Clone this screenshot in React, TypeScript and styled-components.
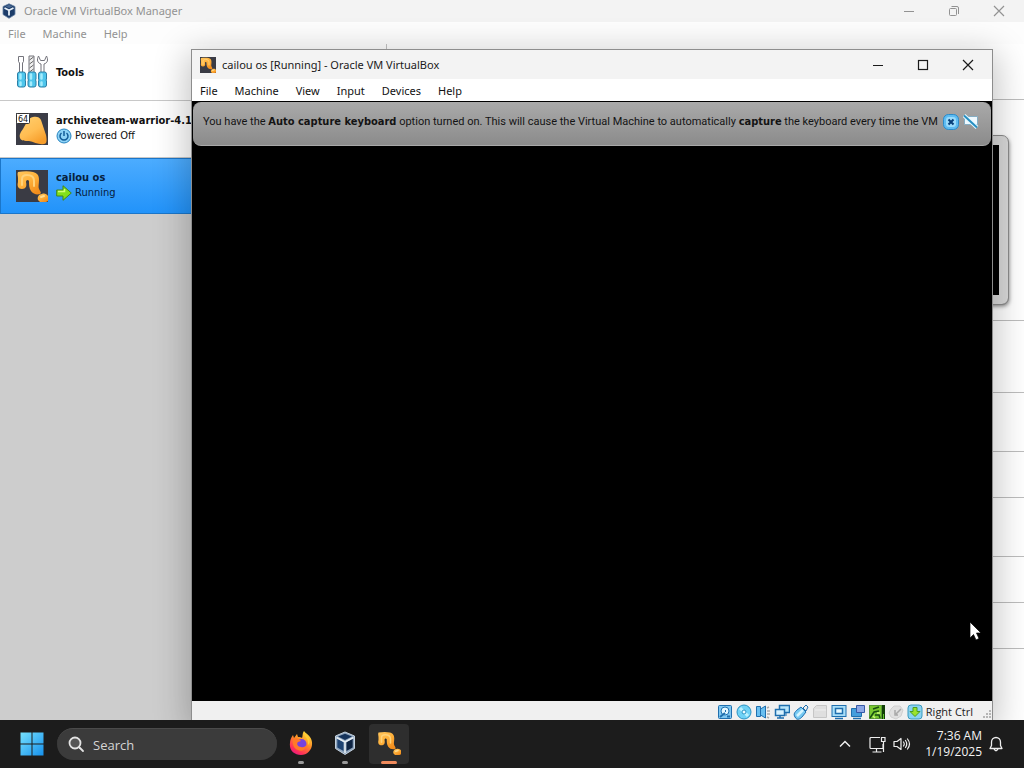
import React from "react";
import styled, { createGlobalStyle, css } from "styled-components";

const ui = `"Open Sans", "Noto Sans", sans-serif`;
const chrome = `"Noto Sans", "Open Sans", sans-serif`;
const qt = `"DejaVu Sans Condensed", "DejaVu Sans", sans-serif`;

const GlobalStyle = createGlobalStyle`
  *, *::before, *::after { box-sizing: border-box; }
  body { margin: 0; font-family: ${ui}; font-size: 12px; overflow: hidden; }
  button { font: inherit; color: inherit; background: none; border: 0; padding: 0; margin: 0; }
  svg { display: block; flex: none; }
  h1, h2, p { margin: 0; font: inherit; }
`;

const Desktop = styled.div`
  display: flex;
  flex-direction: column;
  min-height: 100vh;
`;

const Workspace = styled.div`
  position: relative;
  flex: 1;
  display: flex;
  flex-direction: column;
  overflow: hidden;
`;

const ManagerWindow = styled.main`
  flex: 1;
  display: flex;
  flex-direction: column;
  background: #fff;
`;

const TitleBar = styled.header<{ $active?: boolean }>`
  display: flex;
  align-items: center;
  gap: ${(p) => (p.$active ? 6 : 8)}px;
  height: ${(p) => (p.$active ? 29 : 22)}px;
  padding-left: ${(p) => (p.$active ? 8 : 2)}px;
  background: #f3f3f3;
  color: ${(p) => (p.$active ? "#1a1a1a" : "#929292")};
  font-family: ${chrome};
  font-size: 11px;
  line-height: 16px;
`;

const Title = styled.h1`
  flex: 1;
  white-space: nowrap;
`;

const WindowButton = styled.button`
  display: grid;
  place-items: center;
  width: 45px;
  height: 20px;
`;

const WindowButtons = styled.div<{ $inset: number }>`
  display: flex;
  padding-right: ${(p) => p.$inset}px;
`;

const MenuBar = styled.nav<{ $active?: boolean }>`
  display: flex;
  align-items: center;
  gap: 17px;
  height: 22px;
  padding: 2px 8px 0;
  background: ${(p) => (p.$active ? "#fff" : "#fdfdfd")};
  color: ${(p) => (p.$active ? "#111" : "#929292")};
  font-family: ${chrome};
  font-size: 11px;
  line-height: 16px;
`;

const ManagerBody = styled.div`
  flex: 1;
  display: flex;
`;

const Sidebar = styled.aside`
  display: flex;
  flex-direction: column;
  width: 387px;
  border-right: 1px solid #c4c4c4;
  background: #cdcdcd;
  font-family: ${qt};
  font-size: 11px;
`;

const MachineRow = styled.button<{ $selected?: boolean }>`
  display: flex;
  align-items: center;
  gap: 8px;
  height: 57px;
  padding: 0 16px;
  text-align: left;
  background: #fff;
  color: #111;
  border-bottom: 1px solid #c8c8c8;
  ${(p) =>
    p.$selected &&
    css`
      height: 56px;
      color: #06203c;
      background: linear-gradient(#4cacff, #2293fa);
      border: 1px solid #1b76c9;
      padding: 0 15px;
    `}
`;

const MachineText = styled.span`
  display: flex;
  flex-direction: column;
  padding-bottom: 2px;
  white-space: nowrap;
`;

const MachineName = styled.strong`
  font-size: 11px;
  line-height: 15px;
`;

const MachineState = styled.span`
  display: flex;
  align-items: center;
  gap: 3px;
  line-height: 16px;
`;

const Details = styled.section`
  flex: 1;
  display: flex;
  flex-direction: column;
  background: #fff;
`;

const DetailTools = styled.div`
  height: 56px;
  border-bottom: 1px solid #bdbdbd;
`;

const PreviewPane = styled.div`
  display: flex;
  justify-content: flex-end;
  height: 221px;
  padding: 36px 16px 16px;
  border-bottom: 1px solid #bdbdbd;
`;

const Monitor = styled.div`
  width: 240px;
  border: 9px solid #dadada;
  outline: 1px solid #8c8c8c;
  border-radius: 6px;
  background: #000;
  box-shadow: 1px 2px 4px #777;
`;

const DetailSection = styled.div<{ $height: number }>`
  height: ${(p) => p.$height}px;
  border-bottom: 1px solid #bdbdbd;
`;

const MachineWindow = styled.section`
  position: absolute;
  inset: 49px 31px 0 191px;
  display: flex;
  flex-direction: column;
  border: 1px solid #8d8d8d;
  border-bottom: 0;
  background: #f0f0f0;
  box-shadow: 0 8px 32px 4px rgba(0, 0, 0, 0.24);
`;

const Screen = styled.div`
  flex: 1;
  padding: 1px;
  background: #000;
`;

const Notice = styled.div`
  display: flex;
  align-items: center;
  height: 44px;
  padding: 0 12px 4px 10px;
  border: 1px solid #a9a9a9;
  border-width: 1px 0;
  border-radius: 8px;
  background: linear-gradient(#a9a9a9, #8b8b8b);
  color: #141414;
  font-family: Roboto, "Open Sans", sans-serif;
  font-size: 11px;
  line-height: 16px;
`;

const NoticeText = styled.p`
  flex: 1;
  min-width: 0;
  white-space: nowrap;
  b { font-family: ${qt}; }
`;

const NoticeActions = styled.div`
  display: flex;
  gap: 4px;
  padding-left: 8px;
`;

const StatusBar = styled.footer`
  display: flex;
  align-items: flex-end;
  justify-content: flex-end;
  gap: 3px;
  height: 19px;
  color: #222;
  font-size: 11px;
  line-height: 16px;
`;

const HostKey = styled.span`
  padding-right: 6px;
`;

const Cursor = styled.div`
  position: absolute;
  right: 43px;
  bottom: 79px;
`;

const Taskbar = styled.footer`
  display: flex;
  align-items: center;
  height: 48px;
  padding: 0 21px 0 19px;
  background: #1c1c1c;
  color: #f4f4f4;
`;

const StartButton = styled.button`
  display: grid;
  place-items: center;
  width: 26px;
  height: 40px;
`;

const SearchBox = styled.label`
  display: flex;
  align-items: center;
  gap: 8px;
  width: 220px;
  height: 32px;
  margin: 0 4px 0 12px;
  padding: 0 11px;
  border-radius: 16px;
  background: #3b3b3b;
  border-top: 1px solid #4b4b4b;
`;

const SearchInput = styled.input`
  flex: 1;
  min-width: 0;
  padding: 0;
  border: 0;
  outline: 0;
  background: none;
  color: #d5d5d5;
  font: 13px/20px ${ui};
  &::placeholder { color: #d5d5d5; opacity: 1; }
`;

const TaskButtons = styled.div`
  flex: 1;
  display: flex;
  gap: 4px;
`;

const TaskButton = styled.button<{ $active?: boolean }>`
  display: flex;
  flex-direction: column;
  align-items: center;
  justify-content: space-between;
  width: 40px;
  height: 40px;
  padding: 7px 0 0;
  border-radius: 4px;
  background: ${(p) => (p.$active ? "#2e2e2e" : "transparent")};
  &::after {
    content: "";
    width: ${(p) => (p.$active ? 16 : 6)}px;
    height: 3px;
    border-radius: 2px;
    background: ${(p) => (p.$active ? "#f08b5c" : "#9a9a9a")};
  }
`;

const Tray = styled.div`
  display: flex;
  align-items: center;
  gap: 7px;
`;

const ChevronButton = styled.button`
  margin-right: 11px;
`;

const Clock = styled.time`
  display: flex;
  flex-direction: column;
  width: 64px;
  text-align: right;
  font-size: 12px;
  line-height: 16px;
`;

const MinimizeIcon = () => (
  <svg width="12" height="12" viewBox="0 0 12 12" stroke="currentColor"><path d="M1 6.500h10" /></svg>
);
const MaximizeIcon = () => (
  <svg width="12" height="12" viewBox="0 0 12 12" fill="none" stroke="currentColor" strokeWidth="1.200"><rect x="1.500" y="1.500" width="9" height="9" /></svg>
);
const RestoreIcon = () => (
  <svg width="12" height="12" viewBox="0 0 12 12" fill="none" stroke="currentColor"><rect x="1.500" y="3.500" width="7" height="7" rx="1" /><path d="M3.500 1.500h5.500a1.500 1.500 0 0 1 1.500 1.500v6" /></svg>
);
const CloseIcon = () => (
  <svg width="12" height="12" viewBox="0 0 12 12" stroke="currentColor" strokeWidth="1.200"><path d="M1 1l10 10M11 1L1 11" /></svg>
);

const CubeIcon = ({ size, light }: { size: number; light?: boolean }) =>
  light ? (
    <svg width={size} height={size} viewBox="0 0 24 24" strokeLinejoin="round">
      <path d="M12 1L21.500 5v12.500L12 23.500 2.500 17.500V5z" fill="#8fa5bd" stroke="#c3d1df" />
      <path d="M12 2.800l7 2.700-7 3.500-7-3.500z" fill="#15335b" />
      <path d="M4.300 7.500l6.200 3.500v9L4.300 16.500z" fill="#1d4373" />
      <path d="M19.700 7.500L13.500 11v9l6.200-3.500z" fill="#0e2443" />
      <path d="M3.500 6.500L12 11l8.500-4.500M12 11v11" fill="none" stroke="#e6eef5" strokeWidth="1.500" />
    </svg>
  ) : (
    <svg width={size} height={size + 2} viewBox="0 0 14 16" strokeLinejoin="round">
      <path d="M7 0.800l6 2.700v8L7 15.300 1 11.500v-8z" fill="#1c3c69" stroke="#6480a3" strokeWidth="0.800" />
      <path d="M7 1.800l3.500 1.700L7 5 3.500 3.500z" fill="#4a6a94" />
      <path d="M2.500 5L7 7.200 11.500 5M7 7v5.500" fill="none" stroke="#e6eff8" strokeWidth="1.800" />
    </svg>
  );

const Gold = () => (
  <defs>
    <linearGradient id="gold" x1="0" y1="0" x2="0.700" y2="1"><stop stopColor="#ffc65e" /><stop offset="0.500" stopColor="#ffb23c" /><stop offset="1" stopColor="#f28d1c" /></linearGradient>
  </defs>
);

const MachineIcon = ({ size, plain }: { size: number; plain?: boolean }) => (
  <svg width={size} height={size} viewBox="0 0 32 32">
    <Gold />
    {!plain && <rect width="32" height="32" fill="#3a3b44" />}
    <path d="M2 2c6-1 11-1 15 0 4 1 6 3 6 8 0 4-1 7 0 9 1 2 3 4 1 5-3 1-7 0-9-3-2-3-2-6-2-10-1-2-3-1-3 1 1 4 0 7-4 7-4 0-5-3-4-7V8C2 6 1 4 2 2z" fill="url(#gold)" />
    <path d="M22 30c-1-3 1-6 4-6 2-1 5 0 6 2v5l-2 1h-6z" fill="url(#gold)" />
    <path d="M6 15V9c0-3 2-4 5-4 5 0 7 2 7 6v5" fill="none" stroke="#ffd27a" strokeWidth="2" strokeLinecap="round" />
    <path d="M25 27l3-1" stroke="#ffdc90" strokeWidth="2" strokeLinecap="round" />
  </svg>
);

const ArchiveIcon = () => (
  <svg width="32" height="32" viewBox="0 0 32 32">
    <defs>
      <linearGradient id="lump" x1="0" y1="0" x2="0.600" y2="1"><stop stopColor="#ffd070" /><stop offset="0.600" stopColor="#ffbd52" /><stop offset="1" stopColor="#f79e2b" /></linearGradient>
    </defs>
    <rect width="32" height="32" fill="#3b3c46" />
    <path d="M17 4c3-1 7 0 8 3l5 15c1 5 1 9-2 9-5 1-10-2-15-3-4 0-8 0-9-3-1-4 1-6 3-9 3-5 5-11 10-12z" fill="url(#lump)" />
    <rect x="0.500" y="0.500" width="13" height="10" rx="1" fill="#fff" stroke="#333" />
    <text x="7" y="9" textAnchor="middle" fontFamily="DejaVu Sans" fontSize="8" fill="#111">64</text>
  </svg>
);

const ToolsIcon = () => (
  <svg width="32" height="34" viewBox="0 0 32 34" strokeLinejoin="round">
    <path d="M2.500 1.500h5v5L6.500 8v10h-3V8l-1-1.500z" fill="#fff" stroke="#74747c" />
    <path d="M13 1h5v17h-5z" fill="#eee" stroke="#74747c" />
    <path d="M13.500 5l4-3M13.500 9l4-3M13.500 13l4-3M13.500 17l4-3" stroke="#666" />
    <path d="M22.500 1c-2 4-1 7 2.500 8v9h3V9c3.500-1 4.500-4 2.500-8l-2 4.500h-4z" fill="#fff" stroke="#74747c" />
    {[1.500, 12, 22.500].map((x) => (
      <g key={x}>
        <path d={`M${x} 19q0-2 2-2h4q2 0 2 2v5q-1 1 0 2v4q0 2-2 2h-4q-2 0-2-2v-4q1-1 0-2z`} fill="#4fc6ec" stroke="#2b7ea5" />
        <path d={`M${x + 3} 19.500v4M${x + 3} 27.500v2.500`} stroke="#a5ecfc" strokeWidth="2.500" strokeLinecap="round" />
      </g>
    ))}
  </svg>
);

const PowerIcon = () => (
  <svg width="16" height="16" viewBox="0 0 16 16" fill="none"><circle cx="8" cy="8" r="7" fill="#8ed3f7" stroke="#2684c0" /><path d="M5.500 5a4 4 0 1 0 5 0M8 3v5" stroke="#125c99" strokeWidth="1.500" /></svg>
);
const RunIcon = () => (
  <svg width="16" height="16" viewBox="0 0 16 16"><path d="M.700 5h6.300V.700L15.300 8 7 15.300V11H.700z" fill="#82e01d" stroke="#438619" strokeLinejoin="round" /><path d="M2 6.500h6.500V4" fill="none" stroke="#d1ff78" strokeWidth="1.500" /></svg>
);

const DismissIcon = () => (
  <svg width="16" height="16" viewBox="0 0 16 16"><rect x="0.500" y="0.500" width="15" height="15" rx="5" fill="#5ebcf2" stroke="#2b8bc9" /><rect x="3" y="3" width="10" height="10" rx="3" fill="#9adbfb" /><path d="M5.500 5.500l5 5M10.500 5.500l-5 5" stroke="#073e79" strokeWidth="2" /></svg>
);
const SilenceIcon = () => (
  <svg width="16" height="16" viewBox="0 0 16 16"><path d="M1.500 2.500h13v8h-2v4l-4-4h-7z" fill="#eff9ff" stroke="#85adc3" /><path d="M1 1.500l13 12" stroke="#e4f9ff" strokeWidth="4" /><path d="M1 1.500l13 12" stroke="#268ec2" strokeWidth="2" /></svg>
);

const StatusIcon = ({ children }: { children: React.ReactNode }) => (
  <svg width="16" height="16" viewBox="0 0 16 16" fill="none" stroke="#1f6fae">{children}</svg>
);

const StatusIcons = () => (
  <>
    <StatusIcon><rect x="1.500" y="1.500" width="13" height="13" rx="1" fill="#7fc8f2" /><circle cx="8" cy="7" r="4" fill="#e3f7ff" /><path d="M8 7h1M3 13l5-4M10 12.500h3" strokeWidth="2" /></StatusIcon>
    <StatusIcon><circle cx="8" cy="8" r="7" fill="#6fd2f6" stroke="#2a93c4" /><path d="M4 4l8 8" stroke="#b9f1ff" strokeWidth="3" /><circle cx="8" cy="8" r="2" fill="#effcff" stroke="#2a93c4" /></StatusIcon>
    <StatusIcon><path d="M1.500 2.500h4v10h-4zM5.500 5l5-3v12l-5-3z" fill="#69bff0" /><path d="M12 4l2-1M12 7h3M12 10h3M12 13l2 1" stroke="#aaa" strokeWidth="1.500" /></StatusIcon>
    <StatusIcon><rect x="5.500" y="1.500" width="10" height="7" fill="#b8e6fb" strokeWidth="1.500" /><path d="M12 9v3" /><rect x="1.500" y="5.500" width="9" height="6" fill="#d9f3ff" strokeWidth="1.500" /><path d="M3 14h7M6 12v2" strokeWidth="1.500" /></StatusIcon>
    <StatusIcon><path d="M10 4l3-3 2 2-2 4z" fill="#eee" /><path d="M2 13c-2-3 0-5 2-7l4-3 5 5-4 5c-2 2-5 4-7 0z" fill="#75c9f2" /><path d="M4 12l6-6" stroke="#d4f4ff" strokeWidth="2.500" /></StatusIcon>
    <StatusIcon><path d="M1.500 4.500l3-3h10v12h-13z" fill="#dfdfdf" stroke="#c6c6c6" /><path d="M3 6h11" stroke="#f0f0f0" /></StatusIcon>
    <StatusIcon><rect x="1" y="1.500" width="14" height="11" fill="#a8def8" /><rect x="4.500" y="4.500" width="7" height="5" fill="#e9faff" strokeWidth="1.500" /><path d="M4 14.500h8" strokeWidth="1.500" /></StatusIcon>
    <StatusIcon><path d="M1.500 4.500h10v8h-10z" fill="#459edc" /><path d="M6.500 1.500h8v7h-8z" fill="#8ca7e5" stroke="#3658a6" /><path d="M3 14.500h8" strokeWidth="1.500" /></StatusIcon>
    <StatusIcon><rect x="0.500" y="1.500" width="12" height="13" fill="#79c830" stroke="#5a9b34" /><path d="M1 14l4-6 5-1M10 3L4 5M6 11h4l1 3" stroke="#184e12" strokeWidth="1.500" /><path d="M4 12l2 2M8 9h3" stroke="#caf875" strokeWidth="1.500" /><path d="M14.500 1v14" stroke="#123f08" strokeWidth="3" /><path d="M14.500 10v5" stroke="#61c22b" /></StatusIcon>
    <StatusIcon><path d="M3 5l3-3h6l3 4-2 6-5 3-5-2-2-4z" fill="#e0e0e0" stroke="#d0d0d0" /><path d="M8 10l5-5M7 6v5h3" stroke="#a8a8a8" strokeWidth="1.500" /></StatusIcon>
    <StatusIcon><rect x="1" y="1" width="14" height="14" rx="3" fill="#8ad3f2" stroke="#3b9abd" /><path d="M6 3.500h4v4h3l-5 5-5-5h3z" fill="#9be32c" stroke="#4a9b23" /></StatusIcon>
  </>
);

const WindowsLogo = () => (
  <svg width="24" height="24" viewBox="0 0 24 24">
    <defs><linearGradient id="win" x1="0" y1="0" x2="1" y2="1"><stop stopColor="#76e2ff" /><stop offset="1" stopColor="#1690ec" /></linearGradient></defs>
    <path d="M0.500 0.500h11v11h-11zM12.500 0.500h11v11h-11zM0.500 12.500h11v11h-11zM12.500 12.500h11v11h-11z" fill="url(#win)" />
  </svg>
);

const FirefoxIcon = () => (
  <svg width="24" height="24" viewBox="0 0 24 24">
    <defs><linearGradient id="fox" x1="0.800" y1="0" x2="0.200" y2="1"><stop stopColor="#ffe53e" /><stop offset="0.450" stopColor="#ff8a26" /><stop offset="0.800" stopColor="#ff3158" /><stop offset="1" stopColor="#e31587" /></linearGradient></defs>
    <path d="M15 0c2 3 6 4 7.500 9C25 17 19 24 12 24S0 19 1 12c0-3 1-5 3-8l1 3 3-4 1 3c2 0 3 0 4 1 1-2 0-4 2-7z" fill="url(#fox)" />
    <circle cx="12.500" cy="13" r="5" fill="#7543df" />
    <path d="M4 8c4-2 6 0 8 2l-3 1c-2 2 0 5 3 5 3 1 5-1 6-3-1 6-5 8-9 6-4-1-6-6-5-11z" fill="#ff7a27" />
    <path d="M15 1c0 6 5 5 4 13 2-2 2-4 1-6-1-3-4-4-5-7z" fill="#ffcf30" />
  </svg>
);

const SearchIcon = () => (
  <svg width="17" height="17" viewBox="0 0 17 17" fill="none" stroke="#e4e4e4" strokeWidth="1.800" strokeLinecap="round"><circle cx="7" cy="7" r="5.500" fill="#555" /><path d="M11.500 11.500l3.500 3.500" /></svg>
);

const NetworkIcon = () => (
  <svg width="17" height="17" viewBox="0 0 17 17" fill="none" stroke="#eee" strokeWidth="1.200"><path d="M11 1.500H2q-1 0-1 1v9q0 1 1 1h12V8M7.500 13v3M3.500 16h9M12.500 1.500h3.500v4h-3.500zM14.500 6v10" /></svg>
);
const VolumeIcon = () => (
  <svg width="18" height="16" viewBox="0 0 18 16" fill="none" stroke="#eee" strokeWidth="1.200" strokeLinejoin="round" strokeLinecap="round"><path d="M1 5.500h3L8 2.500v11L4 10.500H1zM10.500 6q1.500 2 0 4M12.500 4.500q2.500 3.500 0 7M14.500 3q4 5 0 10" /></svg>
);
const BellIcon = () => (
  <svg width="14" height="16" viewBox="0 0 14 16" fill="none" stroke="#eee" strokeWidth="1.300" strokeLinejoin="round"><path d="M2.500 6a4.500 4.500 0 0 1 9 0v3.500l1.500 3H1l1.500-3zM5 13q2 3.500 4 0" /></svg>
);

const detailHeights = [72, 59, 46, 59, 46, 46];

export default function App() {
  return (
    <Desktop>
      <GlobalStyle />
      <Workspace>
        <ManagerWindow>
          <TitleBar>
            <CubeIcon size={14} />
            <Title>Oracle VM VirtualBox Manager</Title>
            <WindowButtons $inset={3}>
              <WindowButton aria-label="Minimize"><MinimizeIcon /></WindowButton>
              <WindowButton aria-label="Restore"><RestoreIcon /></WindowButton>
              <WindowButton aria-label="Close"><CloseIcon /></WindowButton>
            </WindowButtons>
          </TitleBar>
          <MenuBar>
            {["File", "Machine", "Help"].map((m) => <button key={m}>{m}</button>)}
          </MenuBar>
          <ManagerBody>
            <Sidebar>
              <MachineRow>
                <ToolsIcon />
                <MachineName>Tools</MachineName>
              </MachineRow>
              <MachineRow>
                <ArchiveIcon />
                <MachineText>
                  <MachineName>archiveteam-warrior-4.1</MachineName>
                  <MachineState><PowerIcon />Powered Off</MachineState>
                </MachineText>
              </MachineRow>
              <MachineRow $selected>
                <MachineIcon size={32} />
                <MachineText>
                  <MachineName>cailou os</MachineName>
                  <MachineState><RunIcon />Running</MachineState>
                </MachineText>
              </MachineRow>
            </Sidebar>
            <Details>
              <DetailTools />
              <PreviewPane><Monitor /></PreviewPane>
              {detailHeights.map((h, i) => <DetailSection key={i} $height={h} />)}
            </Details>
          </ManagerBody>
        </ManagerWindow>

        <MachineWindow>
          <TitleBar $active>
            <MachineIcon size={16} />
            <Title>cailou os [Running] - Oracle VM VirtualBox</Title>
            <WindowButtons $inset={2}>
              <WindowButton aria-label="Minimize"><MinimizeIcon /></WindowButton>
              <WindowButton aria-label="Maximize"><MaximizeIcon /></WindowButton>
              <WindowButton aria-label="Close"><CloseIcon /></WindowButton>
            </WindowButtons>
          </TitleBar>
          <MenuBar $active>
            {["File", "Machine", "View", "Input", "Devices", "Help"].map((m) => <button key={m}>{m}</button>)}
          </MenuBar>
          <Screen>
            <Notice>
              <NoticeText>
                You have the <b>Auto capture keyboard</b> option turned on. This will cause the Virtual Machine to automatically <b>capture</b> the keyboard every time the VM
              </NoticeText>
              <NoticeActions>
                <button aria-label="Close message"><DismissIcon /></button>
                <button aria-label="Do not show again"><SilenceIcon /></button>
              </NoticeActions>
            </Notice>
          </Screen>
          <StatusBar>
            <StatusIcons />
            <HostKey>Right Ctrl</HostKey>
            <svg width="10" height="10" viewBox="0 0 10 10" fill="#b5b5b5"><path d="M7 0h2v2H7zM4 3h2v2H4zM7 3h2v2H7zM1 6h2v2H1zM4 6h2v2H4zM7 6h2v2H7z" /></svg>
          </StatusBar>
        </MachineWindow>
        <Cursor>
          <svg width="12" height="20" viewBox="0 0 12 20"><path d="M1 1v16l3.500-3.500L7 19l3-1.500L7.500 12H12z" fill="#fff" stroke="#000" strokeWidth="0.700" /></svg>
        </Cursor>
      </Workspace>

      <Taskbar>
        <StartButton aria-label="Start"><WindowsLogo /></StartButton>
        <SearchBox>
          <SearchIcon />
          <SearchInput type="text" placeholder="Search" aria-label="Search" />
        </SearchBox>
        <TaskButtons>
          <TaskButton aria-label="Firefox"><FirefoxIcon /></TaskButton>
          <TaskButton aria-label="VirtualBox Manager"><CubeIcon size={24} light /></TaskButton>
          <TaskButton $active aria-label="cailou os"><MachineIcon size={24} plain /></TaskButton>
        </TaskButtons>
        <Tray>
          <ChevronButton aria-label="Show hidden icons">
            <svg width="12" height="8" viewBox="0 0 12 8" fill="none" stroke="#eee" strokeWidth="1.500"><path d="M1 6.500l5-5 5 5" /></svg>
          </ChevronButton>
          <NetworkIcon />
          <VolumeIcon />
          <Clock><span>7:36 AM</span><span>1/19/2025</span></Clock>
          <BellIcon />
        </Tray>
      </Taskbar>
    </Desktop>
  );
}
